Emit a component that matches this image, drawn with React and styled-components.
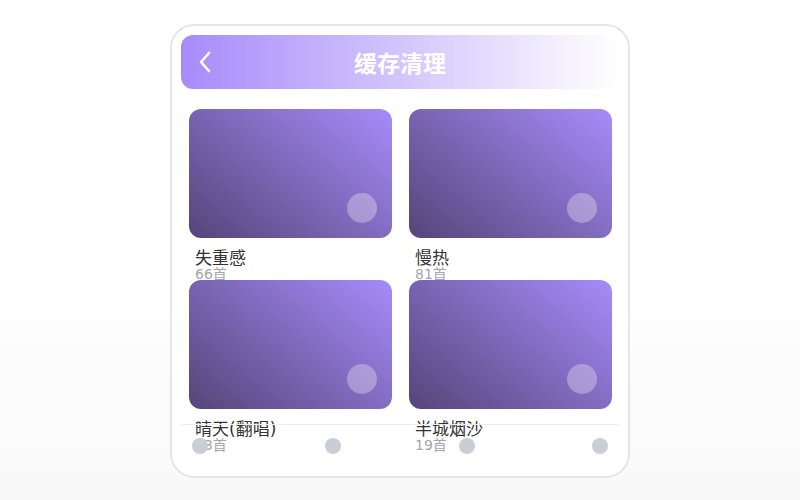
import React from 'react';
import styled, { createGlobalStyle } from 'styled-components';

const GlobalStyle = createGlobalStyle`
  html, body {
    margin: 0;
    height: 100%;
  }
  body {
    font-family: "DejaVu Sans", "Noto Sans CJK SC", sans-serif;
    background: linear-gradient(180deg, #ffffff 50%, #f9f9f9 100%);
  }
`;

const Page = styled.div`
  width: 800px;
  height: 500px;
  display: flex;
  justify-content: center;
  padding-top: 24px;
  box-sizing: border-box;
`;

const Phone = styled.div`
  position: relative;
  width: 460px;
  height: 454px;
  box-sizing: border-box;
  border: 2px solid #e6e6ea;
  border-radius: 24px;
  background: #fff;
  padding: 9px;
  overflow: hidden;
`;

const Header = styled.div`
  height: 54px;
  border-radius: 12px;
  background: linear-gradient(90deg, #a78bfa 0%, #ffffff 100%);
  display: flex;
  align-items: center;
  position: relative;
  padding: 0 17px;
`;

const BackButton = styled.button`
  background: none;
  border: none;
  padding: 0;
  display: flex;
  cursor: pointer;
`;

const Title = styled.h1`
  position: absolute;
  left: 0;
  right: 0;
  margin: 0;
  text-align: center;
  color: #fff;
  font-family: "Noto Sans CJK SC", sans-serif;
  font-size: 23px;
  font-weight: 700;
  pointer-events: none;
`;

const Grid = styled.div`
  display: grid;
  grid-template-columns: 1fr 1fr;
  grid-auto-rows: 154px;
  column-gap: 17px;
  row-gap: 17px;
  padding: 20px 7px 0 8px;
`;

const Item = styled.div`
  display: flex;
  flex-direction: column;
`;

const Cover = styled.div`
  position: relative;
  height: 129px;
  border-radius: 12px;
  background: linear-gradient(40deg, #554579 0%, #a78bfa 100%);
  flex-shrink: 0;
`;

const PlayDot = styled.span`
  position: absolute;
  right: 15px;
  bottom: 15px;
  width: 30px;
  height: 30px;
  border-radius: 50%;
  background: rgba(255, 255, 255, 0.3);
`;

const Name = styled.div`
  margin-top: 11px;
  padding-left: 6px;
  font-size: 17px;
  line-height: 18px;
  color: #333;
`;

const Count = styled.div`
  padding-left: 6px;
  font-size: 14px;
  line-height: 15px;
  color: #a3a6ad;
`;

const BottomBar = styled.div`
  position: absolute;
  left: 10px;
  right: 10px;
  bottom: 0;
  height: 52px;
  border-top: 1px solid #ececef;
  display: flex;
  justify-content: space-between;
  align-items: flex-start;
  padding: 13px 10px 0;
  box-sizing: border-box;
`;

const NavDot = styled.span`
  width: 16px;
  height: 16px;
  border-radius: 50%;
  background: #c9cdd4;
`;

const songs = [
  { name: '失重感', count: 66 },
  { name: '慢热', count: 81 },
  { name: '晴天(翻唱)', count: 13 },
  { name: '半城烟沙', count: 19 },
];

export default function App() {
  return (
    <>
      <GlobalStyle />
      <Page>
        <Phone>
          <Header>
            <BackButton type="button" aria-label="返回">
              <svg width="14" height="22" viewBox="0 0 14 22" fill="none">
                <path d="M11 2 L3 11 L11 20" stroke="#fff" strokeWidth="2.6" strokeLinecap="round" strokeLinejoin="round" />
              </svg>
            </BackButton>
            <Title>缓存清理</Title>
          </Header>
          <Grid>
            {songs.map((s) => (
              <Item key={s.name}>
                <Cover>
                  <PlayDot />
                </Cover>
                <Name>{s.name}</Name>
                <Count>{s.count}首</Count>
              </Item>
            ))}
          </Grid>
          <BottomBar>
            <NavDot />
            <NavDot />
            <NavDot />
            <NavDot />
          </BottomBar>
        </Phone>
      </Page>
    </>
  );
}
